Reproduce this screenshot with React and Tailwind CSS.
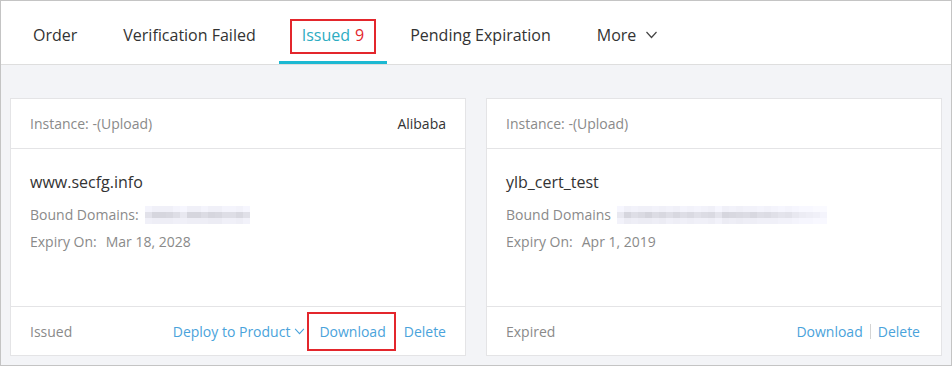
import React from 'react';

const Chevron = ({ className }) => (
  <svg viewBox="0 0 12 8" className={className} fill="none" stroke="currentColor" strokeWidth="1.2">
    <polyline points="1,1 6,6.5 11,1" />
  </svg>
);

// pixelated blur standing in for a hidden domain
const Blurred = ({ cells }) => (
  <div className="flex flex-col">
    {[0, 1, 2].map((r) => (
      <div key={r} className="flex">
        {cells.map((c, i) => (
          <div
            key={i}
            className="w-[7px] h-[6px]"
            style={{ backgroundColor: `rgb(${c[r]},${c[r]},${c[r] + 8})` }}
          />
        ))}
      </div>
    ))}
  </div>
);

const leftCells = [
  [244, 226, 240], [240, 214, 238], [240, 214, 238], [240, 216, 238], [244, 222, 240], [246, 232, 240],
  [240, 214, 238], [240, 214, 238], [244, 220, 238], [240, 214, 236], [240, 216, 236], [244, 222, 240],
  [244, 222, 240], [242, 216, 238], [246, 224, 242],
];

const rightCells = [
  [246, 232, 242], [240, 214, 236], [242, 222, 238], [240, 218, 236], [240, 212, 236], [242, 220, 238],
  [240, 216, 236], [242, 222, 240], [240, 216, 238], [244, 222, 240], [242, 218, 238], [244, 224, 240],
  [242, 220, 240], [240, 218, 238], [246, 228, 242], [240, 214, 236], [242, 216, 238], [240, 218, 236],
  [242, 220, 238], [242, 216, 238], [244, 222, 240], [242, 220, 240], [244, 224, 240], [246, 228, 242],
  [244, 226, 242], [246, 232, 244], [248, 236, 246], [248, 238, 246], [250, 240, 248], [250, 244, 248],
];

const tabs = ['Order', 'Verification Failed', 'Issued', 'Pending Expiration', 'More'];

const Card = ({ vendor, title, domainLabel, cells, expiry, status, deploy }) => (
  <div className="flex-1 flex flex-col bg-white border border-[#e4e4e6]">
    <div className="h-[50px] flex items-center justify-between px-[19px] border-b border-[#e4e4e6] text-[14px]">
      <span className="text-[#8a8a8a]">Instance: -(Upload)</span>
      <span className="text-[#333]">{vendor}</span>
    </div>
    <div className="flex-1 px-[19px] pt-[21px]">
      <div className="text-[16px] text-[#333] leading-[24px]">{title}</div>
      <div className="mt-[10px] flex items-center text-[14px] text-[#8a8a8a] leading-[22px]">
        <span>{domainLabel}</span>
        <div className="ml-[6px]">
          <Blurred cells={cells} />
        </div>
      </div>
      <div className="mt-[5px] flex text-[14px] text-[#8a8a8a] leading-[22px]">
        <span>Expiry On:</span>
        <span className="ml-[9px]">{expiry}</span>
      </div>
    </div>
    <div className={`h-[49px] flex items-center justify-between pl-[19px] border-t border-[#e4e4e6] text-[14px] ${deploy ? 'pr-[19px]' : 'pr-[21px]'}`}>
      <span className="text-[#8a8a8a]">{status}</span>
      <div className="flex items-center text-[#4aa3db]">
        {deploy ? (
          <>
            <span>Deploy to Product</span>
            <Chevron className="w-[11px] h-[7px] ml-[4px]" />
            <span className="relative ml-[14px]">
              Download
              <span className="absolute -left-[12px] -right-[10px] -top-[9px] -bottom-[9px] border-2 border-[#e3262c]" />
            </span>
            <span className="ml-[18px]">Delete</span>
          </>
        ) : (
          <>
            <span>Download</span>
            <span className="mx-[7px] w-px h-[15px] bg-[#d4d4d4]" />
            <span>Delete</span>
          </>
        )}
      </div>
    </div>
  </div>
);

export default function App() {
  return (
    <div
      className="w-[952px] h-[366px] border border-[#c4c4c4] bg-[#f3f4f7] flex flex-col"
      style={{ fontFamily: '"Open Sans", "Noto Sans", sans-serif' }}
    >
      <div className="h-[64px] bg-white border-b border-[#dedede] flex pl-[9px] shrink-0">
        {tabs.map((t) => {
          const active = t === 'Issued';
          return (
            <div
              key={t}
              className={`relative flex items-center pt-[4px] px-[23px] text-[16px] ${active ? 'text-[#2cacc2]' : 'text-[#333]'}`}
            >
              <span>{t}</span>
              {active && <span className="ml-[5px] text-[#e3262c]">9</span>}
              {t === 'More' && <Chevron className="w-[13px] h-[8px] ml-[9px] text-[#444]" />}
              {active && (
                <>
                  <span className="absolute left-[11px] right-[11px] top-[18px] h-[35px] border-2 border-[#e3262c]" />
                  <span className="absolute left-0 right-0 bottom-0 h-[3px] bg-[#1cb8d2]" />
                </>
              )}
            </div>
          );
        })}
      </div>
      <div className="flex-1 flex gap-[20px] px-[9px] pt-[33px] pb-[9px]">
        <Card
          vendor="Alibaba"
          title="www.secfg.info"
          domainLabel="Bound Domains:"
          cells={leftCells}
          expiry="Mar 18, 2028"
          status="Issued"
          deploy
        />
        <Card
          vendor=""
          title="ylb_cert_test"
          domainLabel="Bound Domains"
          cells={rightCells}
          expiry="Apr 1, 2019"
          status="Expired"
        />
      </div>
    </div>
  );
}
